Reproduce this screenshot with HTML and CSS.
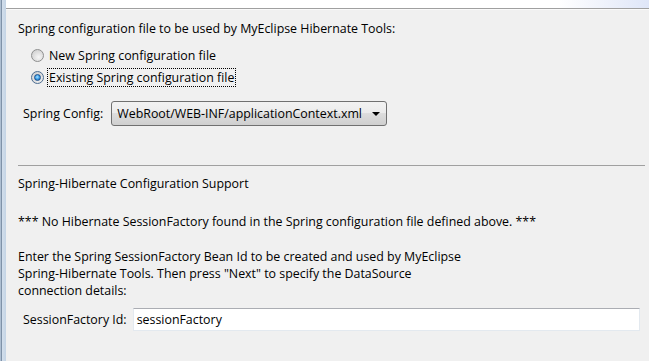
FILE: index.html
```html
<!DOCTYPE html>
<html lang="en">
<head>
    <meta charset="UTF-8">
    <title>Spring Capabilities</title>
    <link rel="stylesheet" href="styles.css">
</head>
<body>
    <div class="window">
        <div class="frame-edge"></div>
        <div class="page">
            <div class="banner"></div>
            <div class="content">
                <p class="intro">Spring configuration file to be used by MyEclipse Hibernate Tools:</p>

                <div class="radios">
                    <label class="radio-row">
                        <span class="radio"></span>
                        <span class="radio-text">New Spring configuration file</span>
                    </label>
                    <label class="radio-row">
                        <span class="radio checked"></span>
                        <span class="radio-text focused">Existing Spring configuration file</span>
                    </label>
                </div>

                <div class="field-row combo-row">
                    <span class="field-label">Spring Config:</span>
                    <div class="combo">
                        <span class="combo-value">WebRoot/WEB-INF/applicationContext.xml</span>
                        <span class="combo-arrow"></span>
                    </div>
                </div>

                <div class="separator"></div>

                <p class="section-title">Spring-Hibernate Configuration Support</p>
                <p class="warning">*** No Hibernate SessionFactory found in the Spring configuration file defined above. ***</p>
                <p class="help">Enter the Spring SessionFactory Bean Id to be created and used by MyEclipse<br>Spring-Hibernate Tools. Then press "Next" to specify the DataSource<br>connection details:</p>

                <div class="field-row input-row">
                    <span class="field-label">SessionFactory Id:</span>
                    <div class="text-input">sessionFactory</div>
                </div>
            </div>
        </div>
    </div>
</body>
</html>
```

FILE: styles.css
```css
body {
    margin: 0;
    font-family: 'Open Sans', 'Noto Sans', sans-serif;
    font-size: 12.4px;
    color: #000;
    background-color: #f0f0f0;
}

p {
    margin: 0;
    line-height: 17px;
}

.window {
    display: flex;
    height: 361px;
    overflow: hidden;
}

.frame-edge {
    width: 6px;
    flex-shrink: 0;
    background: linear-gradient(to right, #aebfd2 0, #aebfd2 1px, #7f92a8 1px, #7f92a8 2px, #d3dfec 2px, #c4d4e5 6px);
}

.page {
    flex: 1;
    display: flex;
    flex-direction: column;
}

.banner {
    height: 8px;
    background: linear-gradient(to right, #fff 0, #fff 86%, #dfe6f8 100%);
    border-bottom: 1px solid #a0a0a0;
    box-shadow: 0 1px 0 #fafafa;
}

.content {
    padding: 10px 0 0 12px;
}

.intro {
    margin-top: 1px;
}

.radios {
    padding-left: 13px;
    margin-top: 7px;
}

.radio-row {
    display: flex;
    align-items: center;
    height: 22px;
}

.radio {
    width: 11px;
    height: 11px;
    border: 1px solid #8e8f8f;
    border-radius: 50%;
    background: radial-gradient(circle at 60% 65%, #f6f6f6 0, #dcdcdc 55%, #c8c8c8 100%);
    margin-right: 3px;
    position: relative;
}

.radio.checked {
    border-color: #4d6e92;
}

.radio.checked::after {
    content: '';
    position: absolute;
    left: 2px;
    top: 2px;
    width: 5px;
    height: 5px;
    border-radius: 50%;
    border: 1px solid #1b4f8c;
    background: radial-gradient(circle at 45% 40%, #a9e3ff 0, #3a9ee8 50%, #105aa8 100%);
}

.radio-text {
    padding: 0 1px;
    border: 1px dotted transparent;
}

.radio-text.focused {
    border-color: #000;
}

.field-row {
    display: flex;
    align-items: center;
    padding-left: 5px;
}

.combo-row {
    margin-top: 13px;
}

.field-label {
    margin-right: 6px;
}

.combo-row .field-label {
    margin-right: 8px;
}

.combo {
    width: 276px;
    height: 25px;
    box-sizing: border-box;
    border: 1px solid #707070;
    border-radius: 3px;
    background: linear-gradient(to bottom, #f2f2f2 0, #ebebeb 50%, #dddddd 50%, #cfcfcf 100%);
    display: flex;
    align-items: center;
    justify-content: space-between;
    padding: 0 5px;
}

.combo-value {
    white-space: nowrap;
}

.combo-arrow {
    width: 0;
    height: 0;
    border-left: 4px solid transparent;
    border-right: 4px solid transparent;
    border-top: 4px solid #000;
    margin-right: 1px;
}

.separator {
    height: 1px;
    background-color: #a0a0a0;
    margin: 39px 4px 0 0;
}

.section-title {
    margin-top: 9px;
}

.warning {
    margin-top: 21px;
}

.help {
    margin-top: 18px;
}

.input-row {
    margin-top: 9px;
}

.text-input {
    width: 507px;
    height: 23px;
    box-sizing: border-box;
    line-height: 21px;
    padding: 0 3px;
    background-color: #fff;
    border: 1px solid #e3e9ef;
    border-top-color: #abadb3;
}
```
